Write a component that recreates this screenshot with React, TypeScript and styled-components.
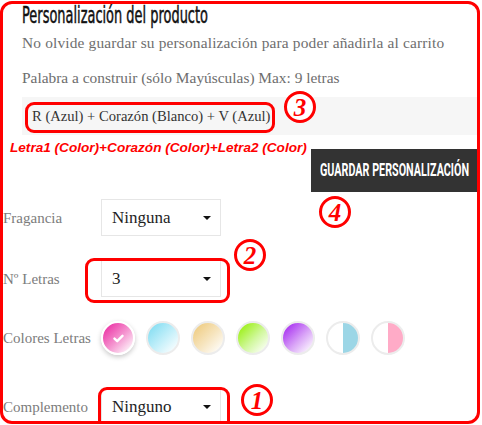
import React, { useLayoutEffect, useRef, useState } from "react";
import styled, { createGlobalStyle } from "styled-components";

const Global = createGlobalStyle`
  html, body { margin: 0; padding: 0; background: #fff; }
  body { font-family: "Liberation Serif", serif; }
  * { box-sizing: border-box; }
`;

const Frame = styled.div`
  position: relative;
  width: 480px;
  height: 423px;
  margin-top: 1px;
  border: 3px solid #ff0000;
  border-radius: 12px;
  overflow: hidden;
`;

const Intro = styled.div`
  padding-left: 19px;
`;

const Squeeze = styled.span`
  display: inline-block;
  white-space: nowrap;
  transform-origin: left center;
`;

/* Condensed display text (the site uses a narrow display face): the text is
   squeezed horizontally to the width it takes in the original. */
function FitText({ width, children }: { width: number; children: React.ReactNode }) {
  const ref = useRef<HTMLSpanElement>(null);
  const [scale, setScale] = useState(1);
  useLayoutEffect(() => {
    if (ref.current) {
      const w = ref.current.getBoundingClientRect().width / scale;
      if (w > 0) setScale(width / w);
    }
    // eslint-disable-next-line react-hooks/exhaustive-deps
  }, [width]);
  return (
    <Squeeze ref={ref} style={{ transform: `scaleX(${scale})` }}>
      {children}
    </Squeeze>
  );
}

const Title = styled.h3`
  margin: 0;
  font-family: "DejaVu Sans", sans-serif;
  font-weight: 400;
  font-size: 22.5px;
  line-height: 22px;
  color: #111;
  -webkit-text-stroke: 0.5px #111;
`;

const Note = styled.p<{ $gap: number; $track?: number }>`
  margin: ${(p) => p.$gap}px 0 0;
  font-size: 15.4px;
  letter-spacing: ${(p) => p.$track ?? 0}px;
  line-height: 20px;
  color: #6e6e6e;
  white-space: nowrap;
`;

const Band = styled.div`
  margin: 9px 0 0 19px;
  height: 38px;
  padding-left: 10px;
  background: #f6f6f6;
  font-size: 14.6px;
  line-height: 38px;
  color: #333;
`;

const ButtonRow = styled.div`
  display: flex;
  justify-content: flex-end;
  margin-top: 14px;
`;

const SaveButton = styled.button`
  width: 166px;
  height: 43px;
  border: 0;
  padding: 0 0 0 9px;
  background: #333;
  color: #fff;
  font-family: Roboto, "DejaVu Sans", sans-serif;
  font-size: 17.5px;
  font-weight: 700;
  line-height: 43px;
  text-align: left;
  cursor: pointer;
`;

const Form = styled.div`
  margin-top: 7px;
  display: flex;
  flex-direction: column;
`;

const Row = styled.div<{ $gap: number }>`
  display: grid;
  grid-template-columns: 98px auto;
  align-items: center;
  margin-top: ${(p) => p.$gap}px;
`;

const Label = styled.span`
  font-size: 15px;
  line-height: 20px;
  color: #7c7c7c;
  white-space: nowrap;
`;

const Select = styled.div`
  width: 120px;
  height: 37px;
  border: 1px solid #e6e6e6;
  padding: 0 9px 0 10px;
  display: flex;
  align-items: center;
  justify-content: space-between;
  font-size: 17px;
  color: #1e1e1e;
  background: #fff;
`;

const Caret = styled.span`
  width: 0;
  height: 0;
  border-left: 4px solid transparent;
  border-right: 4px solid transparent;
  border-top: 4px solid #111;
  margin-top: 1px;
`;

const Swatches = styled.div`
  display: flex;
  gap: 11px;
`;

const Swatch = styled.span<{ $bg: string; $selected?: boolean }>`
  width: 34px;
  height: 34px;
  border-radius: 50%;
  border: 2px solid ${(p) => (p.$selected ? "#fff" : "#ececec")};
  background: ${(p) => p.$bg};
  box-shadow: ${(p) => (p.$selected ? "0 2px 5px rgba(0,0,0,0.22)" : "none")};
  display: flex;
  align-items: center;
  justify-content: center;
`;

/* ---- annotation overlay (drawn over the page) ---- */

const Mark = styled.span<{ $x: number; $y: number; $w: number; $h: number }>`
  position: absolute;
  left: ${(p) => p.$x}px;
  top: ${(p) => p.$y}px;
  width: ${(p) => p.$w}px;
  height: ${(p) => p.$h}px;
  border: 3px solid #f00;
  border-radius: 9px;
  pointer-events: none;
`;

const Circled = styled.span<{ $x: number; $y: number }>`
  position: absolute;
  left: ${(p) => p.$x}px;
  top: ${(p) => p.$y}px;
  width: 32px;
  height: 32px;
  border: 3px solid #f00;
  border-radius: 50%;
  display: flex;
  align-items: center;
  justify-content: center;
  font-family: "Liberation Serif", serif;
  font-style: italic;
  font-weight: 700;
  font-size: 25px;
  line-height: 1;
  color: #f00;
  background: #fff;
`;

const Hint = styled.span`
  position: absolute;
  left: 7px;
  top: 136px;
  font-family: "Liberation Sans", Arial, sans-serif;
  font-style: italic;
  font-weight: 700;
  font-size: 13.6px;
  line-height: 16px;
  color: #f00;
  white-space: nowrap;
`;

const Check = () => (
  <svg width="11" height="9" viewBox="0 0 11 9" aria-hidden>
    <path d="M1.5 4.6 L4.2 7.2 L9.5 1.8" fill="none" stroke="#fff" strokeWidth="2.4" strokeLinecap="round" strokeLinejoin="round" />
  </svg>
);

const swatches = [
  "linear-gradient(135deg, #ec34a6 10%, #f59ad2 55%, #fff 95%)",
  "linear-gradient(135deg, #86def2 10%, #c6f0fa 55%, #fff 95%)",
  "linear-gradient(135deg, #efcd84 10%, #f7e6c2 55%, #fff 95%)",
  "linear-gradient(135deg, #9cf017 10%, #d2f8a0 55%, #fff 95%)",
  "linear-gradient(135deg, #a932f1 10%, #d9a4f7 55%, #fff 95%)",
  "linear-gradient(90deg, #fff 50%, #9cd6e6 50%)",
  "linear-gradient(90deg, #fff 50%, #ffabc7 50%)",
];

export default function App() {
  return (
    <>
      <Global />
      <Frame>
        <Intro>
          <Title>
            <FitText width={186}>Personalización del producto</FitText>
          </Title>
          <Note $gap={7} $track={0.16}>
            No olvide guardar su personalización para poder añadirla al carrito
          </Note>
          <Note $gap={15}>Palabra a construir (sólo Mayúsculas) Max: 9 letras</Note>
        </Intro>
        <Band>R (Azul) + Corazón (Blanco) + V (Azul)</Band>
        <ButtonRow>
          <SaveButton>
            <FitText width={149}>GUARDAR PERSONALIZACIÓN</FitText>
          </SaveButton>
        </ButtonRow>
        <Form>
          <Row $gap={0}>
            <Label>Fragancia</Label>
            <Select>
              Ninguna
              <Caret />
            </Select>
          </Row>
          <Row $gap={24}>
            <Label>Nº Letras</Label>
            <Select>
              3
              <Caret />
            </Select>
          </Row>
          <Row $gap={24}>
            <Label>Colores Letras</Label>
            <Swatches>
              {swatches.map((bg, i) => (
                <Swatch key={i} $bg={bg} $selected={i === 0}>
                  {i === 0 && <Check />}
                </Swatch>
              ))}
            </Swatches>
          </Row>
          <Row $gap={33}>
            <Label>Complemento</Label>
            <Select>
              Ninguno
              <Caret />
            </Select>
          </Row>
        </Form>

        <Mark $x={22} $y={98} $w={250} $h={31} />
        <Circled $x={281} $y={87}>3</Circled>
        <Hint>Letra1 (Color)+Corazón (Color)+Letra2 (Color)</Hint>
        <Circled $x={316} $y={192}>4</Circled>
        <Circled $x={231} $y={235}>2</Circled>
        <Mark $x={82} $y={254} $w={145} $h={45} />
        <Mark $x={95} $y={383} $w={132} $h={44} />
        <Circled $x={238} $y={380}>1</Circled>
      </Frame>
    </>
  );
}
